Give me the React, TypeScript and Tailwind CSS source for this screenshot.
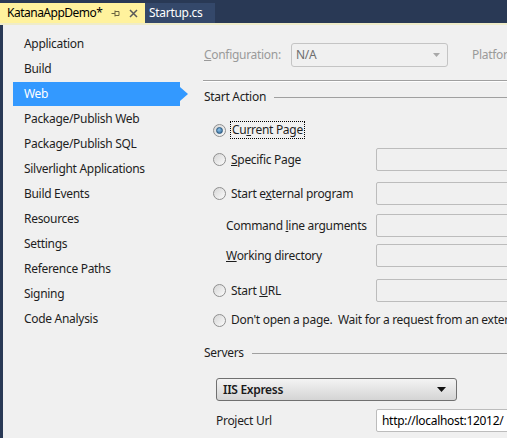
import React from 'react';

const font = { fontFamily: '"Noto Sans", "Open Sans", sans-serif' };

const navItems = [
  'Application',
  'Build',
  'Web',
  'Package/Publish Web',
  'Package/Publish SQL',
  'Silverlight Applications',
  'Build Events',
  'Resources',
  'Settings',
  'Reference Paths',
  'Signing',
  'Code Analysis',
];

function Radio({ checked }: { checked?: boolean }) {
  return (
    <span className="flex h-[13px] w-[13px] shrink-0 items-center justify-center rounded-full border border-[#8f8f8f] bg-gradient-to-br from-[#d6d6d6] to-[#fbfbfb]">
      {checked && (
        <span className="h-[7px] w-[7px] rounded-full border border-[#2c5a80] bg-[radial-gradient(circle_at_40%_35%,#8fc4ec,#2b5f8c)]" />
      )}
    </span>
  );
}

function TextBox({ white, children }: { white?: boolean; children?: React.ReactNode }) {
  return (
    <div
      className={`h-[23px] w-[150px] shrink-0 rounded-[2px] border border-[#bcbcbc] px-[5px] leading-[21px] text-black ${
        white ? 'bg-white' : 'bg-[#f0f0f0]'
      }`}
    >
      {children}
    </div>
  );
}

function GroupHeader({ label }: { label: string }) {
  return (
    <div className="flex h-[16px] items-center gap-[8px]">
      <span className="shrink-0 text-[#1e1e1e]">{label}</span>
      <div className="h-px flex-1 bg-[#a0a0a0]" />
    </div>
  );
}

function FieldRow({
  radio,
  label,
  className,
  children,
}: {
  radio?: boolean;
  label: React.ReactNode;
  className: string;
  children?: React.ReactNode;
}) {
  return (
    <div className={`flex h-[23px] items-center whitespace-nowrap ${className}`}>
      <div className={`flex w-[163px] shrink-0 items-center ${radio ? 'gap-[5px]' : 'pl-[13px]'}`}>
        {radio && <Radio />}
        <span>{label}</span>
      </div>
      {children}
    </div>
  );
}

export default function App(): React.ReactElement {
  return (
    <div
      className="flex h-[438px] w-[507px] flex-col overflow-hidden bg-[#f0f0f0] text-[12px] tracking-[-0.3px]"
      style={font}
    >
      {/* tab well */}
      <div className="flex h-[23px] shrink-0 items-end bg-[#293955]">
        <div className="flex h-[20px] w-[145px] shrink-0 items-center whitespace-nowrap bg-[#fff29d] pl-[7px] text-black">
          <span className="shrink-0 tracking-[-0.5px]">KatanaAppDemo*</span>
          {/* pin */}
          <svg className="ml-[9px] shrink-0" width="9" height="9" viewBox="0 0 9 9">
            <path d="M0.5 4.5 H4 M4 1.5 V7.5 M4 2.5 H8 V6.5 H4" fill="none" stroke="#6b6440" strokeWidth="1" />
          </svg>
          {/* close */}
          <svg className="ml-[9px] shrink-0" width="9" height="9" viewBox="0 0 9 9">
            <path d="M1 1 L8 8 M8 1 L1 8" stroke="#5a5a5a" strokeWidth="1.5" />
          </svg>
        </div>
        <div className="flex h-[20px] w-[70px] shrink-0 items-center bg-[#34486a] pl-[4px] text-white">
          Startup.cs
        </div>
      </div>
      <div className="h-[2px] shrink-0 bg-[#efecc9]" />

      <div className="flex flex-1 border-l-[3px] border-[#293955]">
        {/* sidebar */}
        <div className="w-[200px] shrink-0 pl-[10px] pt-[6px] text-[#1e1e1e]">
          {navItems.map((item) =>
            item === 'Web' ? (
              <div key={item} className="flex h-[25px] items-center">
                <div className="flex h-[24px] w-[167px] items-center bg-[#3399ff] pl-[11px] text-white">{item}</div>
                <svg className="shrink-0" width="8" height="14" viewBox="0 0 8 14">
                  <path d="M0 0 L8 7 L0 14 Z" fill="#3399ff" />
                </svg>
              </div>
            ) : (
              <div key={item} className="flex h-[25px] items-center pl-[11px]">
                {item}
              </div>
            )
          )}
        </div>

        {/* content */}
        <div className="flex min-w-0 flex-1 flex-col overflow-hidden pt-[18px] text-[#1e1e1e]">
          <div className="flex h-[24px] items-center whitespace-nowrap pl-[1px]">
            <span className="w-[87px] shrink-0 text-[#9a9a9a]">
              <u>C</u>onfiguration:
            </span>
            <div className="flex h-[24px] w-[157px] shrink-0 items-center rounded-[3px] border border-[#c4c4c4] pl-[4px] text-[#6e6e6e]">
              <span>N/A</span>
              <svg className="ml-auto mr-[7px] shrink-0" width="7" height="4" viewBox="0 0 7 4">
                <path d="M0 0 L7 0 L3.5 4 Z" fill="#a8a8a8" />
              </svg>
            </div>
            <span className="ml-[24px] shrink-0 text-[#9a9a9a]">Platform:</span>
          </div>

          <div className="mt-[13px] h-px bg-[#a0a0a0]" />
          <div className="h-px bg-white" />

          <div className="mt-[7px] pl-[1px]">
            <GroupHeader label="Start Action" />
          </div>

          <div className="flex flex-col pl-[10px]">
            <div className="mt-[16px] flex h-[18px] items-center gap-[4px] whitespace-nowrap">
              <Radio checked />
              <span className="border border-dotted border-black px-[1px] leading-[16px]">
                Cu<u>r</u>rent Page
              </span>
            </div>

            <FieldRow radio className="mt-[9px]" label={<><u>S</u>pecific Page</>}>
              <TextBox />
            </FieldRow>

            <FieldRow radio className="mt-[11px]" label={<>Start e<u>x</u>ternal program</>}>
              <TextBox />
            </FieldRow>

            <FieldRow className="mt-[9px]" label={<>Command <u>l</u>ine arguments</>}>
              <TextBox />
            </FieldRow>

            <FieldRow className="mt-[7px]" label={<><u>W</u>orking directory</>}>
              <TextBox />
            </FieldRow>

            <FieldRow radio className="mt-[12px]" label={<>Start <u>U</u>RL</>}>
              <TextBox />
            </FieldRow>

            <div className="mt-[9px] flex h-[18px] items-center gap-[5px] whitespace-nowrap">
              <Radio />
              <span>Don't open a page.&nbsp; Wait for a request from an external application.</span>
            </div>
          </div>

          <div className="mt-[16px] pl-[1px]">
            <GroupHeader label="Servers" />
          </div>

          <div className="mt-[17px] flex flex-col pl-[13px]">
            <div className="flex h-[23px] w-[241px] shrink-0 items-center rounded-[3px] border border-[#707070] bg-gradient-to-b from-[#f4f4f4] to-[#d4d4d4] pl-[6px] font-semibold text-[#1a1a1a]">
              <span>IIS Express</span>
              <svg className="ml-auto mr-[10px] shrink-0" width="9" height="5" viewBox="0 0 9 5">
                <path d="M0 0 L9 0 L4.5 5 Z" fill="#111" />
              </svg>
            </div>
            <div className="mt-[8px] flex h-[23px] items-center whitespace-nowrap">
              <span className="w-[160px] shrink-0">
                Pro<u>j</u>ect Url
              </span>
              <TextBox white>http://localhost:12012/</TextBox>
            </div>
          </div>
        </div>
      </div>
    </div>
  );
}
